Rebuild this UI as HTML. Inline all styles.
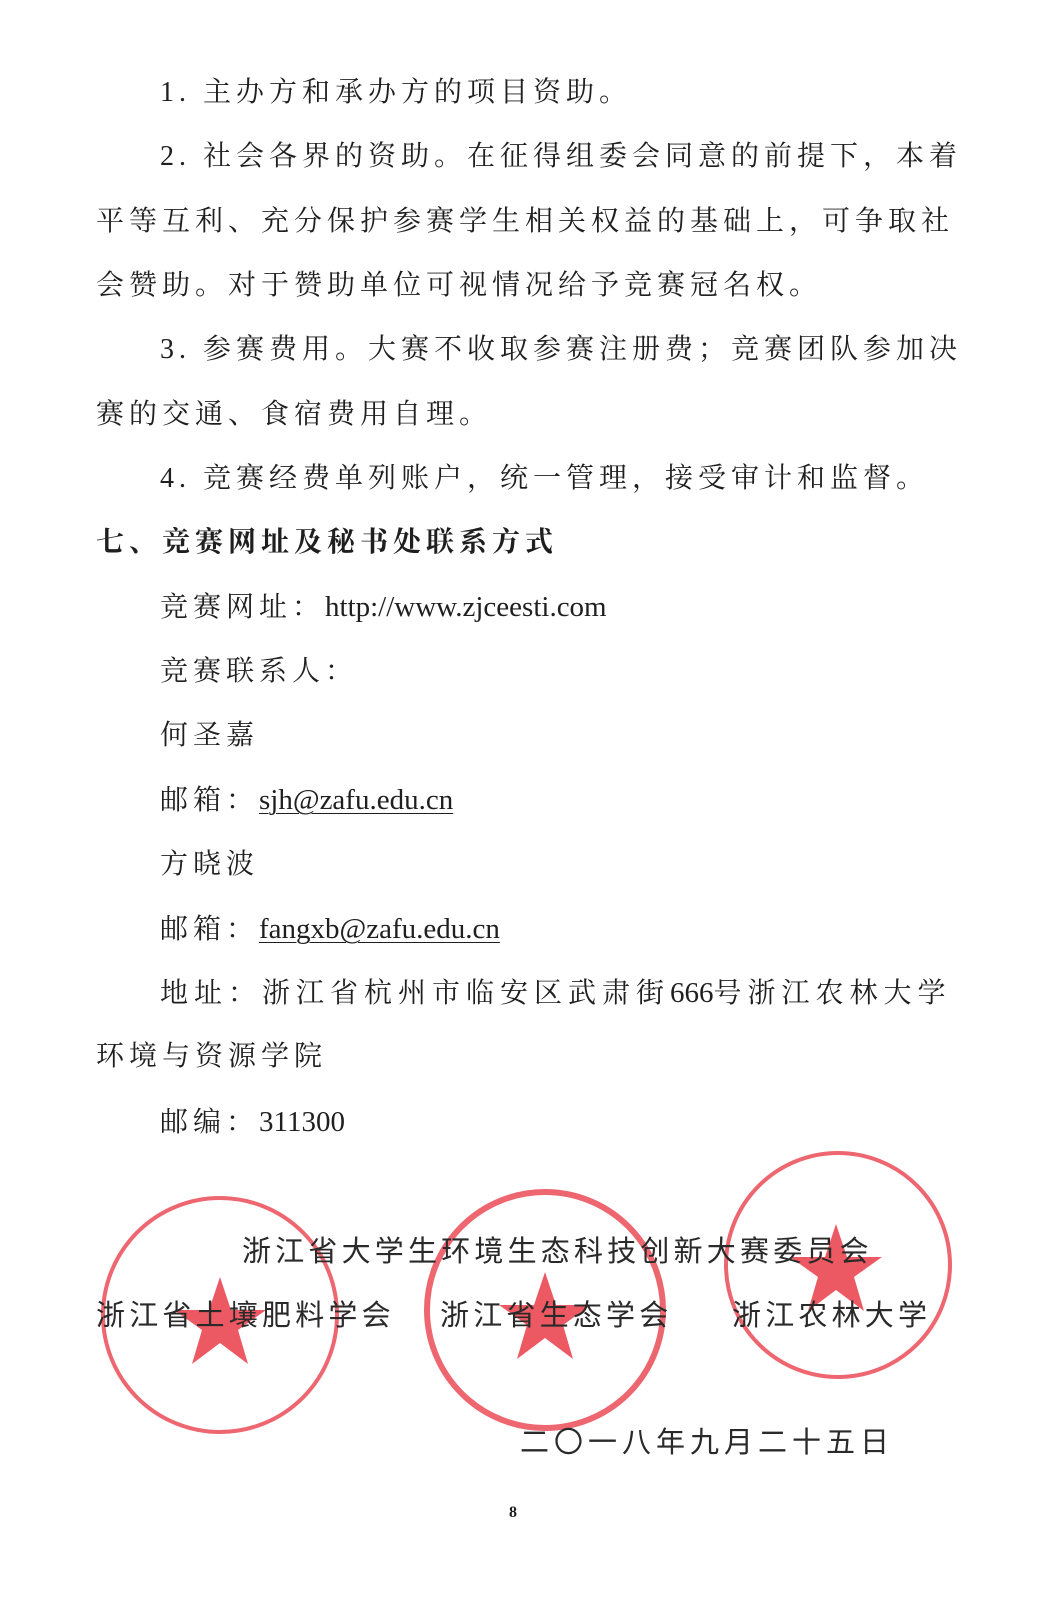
<!DOCTYPE html>
<html><head><meta charset="utf-8"><style>
html,body{margin:0;padding:0;background:#fff;}
body{width:1053px;height:1600px;position:relative;overflow:hidden;font-family:"Liberation Serif","Noto Serif CJK SC",serif;color:#1f1f1f;}
.l{position:absolute;font-size:28px;letter-spacing:5px;white-space:nowrap;line-height:34px;}
.b{font-weight:bold;}
.u{text-decoration:underline;text-decoration-thickness:1px;text-underline-offset:4px;letter-spacing:0;font-size:29px;}
.en{letter-spacing:0;font-size:29px;}
.s{position:absolute;font-family:"Noto Sans CJK SC","WenQuanYi Zen Hei",sans-serif;font-size:29px;letter-spacing:4.2px;color:#2a2a2a;white-space:nowrap;}
svg{position:absolute;left:0;top:0;}
</style></head><body>
<svg width="1053" height="1600">
<g fill="none" stroke="#e8404c" opacity="0.8">
<circle cx="220" cy="1315" r="117" stroke-width="4"/>
<circle cx="545" cy="1310" r="118" stroke-width="6"/>
<circle cx="838" cy="1265" r="112" stroke-width="4"/>
</g>
<g fill="#e8303c" opacity="0.8">
<polygon points="220,1277 231,1310 266,1310 238,1330 248,1364 220,1343 192,1364 202,1330 174,1310 209,1310"/>
<polygon points="545,1272 556,1305 591,1305 563,1325 573,1359 545,1338 517,1359 527,1325 499,1305 534,1305"/>
<polygon points="836,1224 847,1257 882,1257 854,1277 864,1311 836,1290 808,1311 818,1277 790,1257 825,1257"/>
</g>
</svg>
<div class="l" style="left:160px;top:76px">1. 主办方和承办方的项目资助。</div>
<div class="l" style="left:160px;top:140px">2. 社会各界的资助。在征得组委会同意的前提下，本着</div>
<div class="l" style="left:96px;top:205px">平等互利、充分保护参赛学生相关权益的基础上，可争取社</div>
<div class="l" style="left:96px;top:269px">会赞助。对于赞助单位可视情况给予竞赛冠名权。</div>
<div class="l" style="left:160px;top:333px">3. 参赛费用。大赛不收取参赛注册费；竞赛团队参加决</div>
<div class="l" style="left:96px;top:398px">赛的交通、食宿费用自理。</div>
<div class="l" style="left:160px;top:462px">4. 竞赛经费单列账户，统一管理，接受审计和监督。</div>
<div class="l b" style="left:96px;top:526px">七、竞赛网址及秘书处联系方式</div>
<div class="l" style="left:160px;top:590px">竞赛网址：<span class="en">http://www.zjceesti.com</span></div>
<div class="l" style="left:160px;top:655px">竞赛联系人：</div>
<div class="l" style="left:160px;top:719px">何圣嘉</div>
<div class="l" style="left:160px;top:783px">邮箱：<span class="u">sjh@zafu.edu.cn</span></div>
<div class="l" style="left:160px;top:848px">方晓波</div>
<div class="l" style="left:160px;top:912px">邮箱：<span class="u">fangxb@zafu.edu.cn</span></div>
<div class="l" style="left:160px;top:976px;letter-spacing:6px">地址：浙江省杭州市临安区武肃街<span class="en">666</span>号浙江农林大学</div>
<div class="l" style="left:96px;top:1040px">环境与资源学院</div>
<div class="l" style="left:160px;top:1105px">邮编：<span class="en">311300</span></div>
<div class="s" style="left:242px;top:1228px">浙江省大学生环境生态科技创新大赛委员会</div>
<div class="s" style="left:96px;top:1292px">浙江省土壤肥料学会</div>
<div class="s" style="left:440px;top:1292px">浙江省生态学会</div>
<div class="s" style="left:732px;top:1292px">浙江农林大学</div>
<div class="s" style="left:520px;top:1419px;letter-spacing:5px">二〇一八年九月二十五日</div>
<div style="position:absolute;left:509px;top:1504px;font-size:16px;font-weight:bold;">8</div>
</body></html>
